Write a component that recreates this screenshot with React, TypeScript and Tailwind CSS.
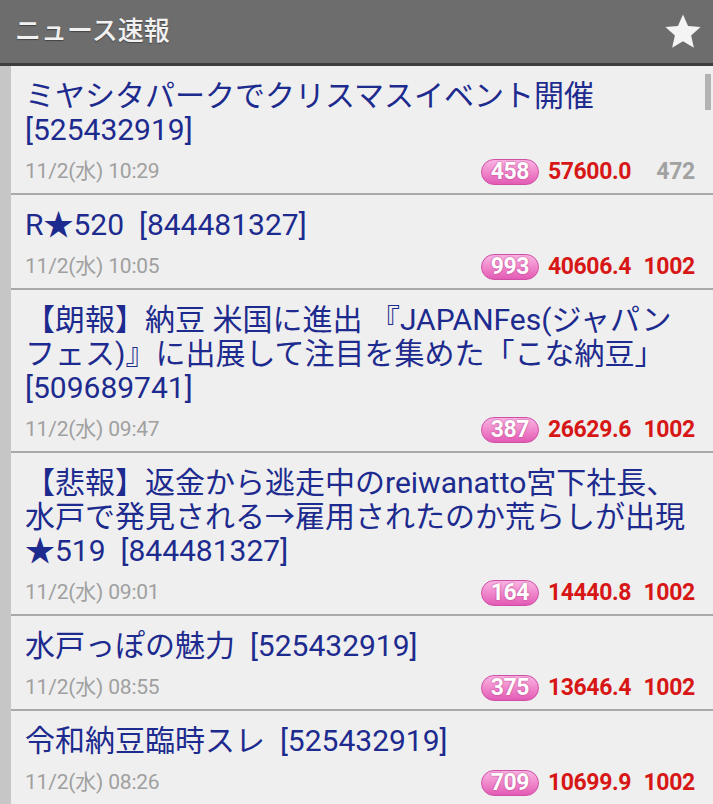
const ROWS = [
  { lines: ["ミヤシタパークでクリスマスイベント開催", "[525432919]"], time: "11/2(水) 10:29", badge: "458", score: "57600.0", count: "472", gray: true },
  { lines: ["R★520\u00a0\u00a0[844481327]"], time: "11/2(水) 10:05", badge: "993", score: "40606.4", count: "1002" },
  { lines: ["【朗報】納豆 米国に進出 『JAPANFes(ジャパン", "フェス)』に出展して注目を集めた「こな納豆」", "[509689741]"], time: "11/2(水) 09:47", badge: "387", score: "26629.6", count: "1002" },
  { lines: ["【悲報】返金から逃走中のreiwanatto宮下社長、", "水戸で発見される→雇用されたのか荒らしが出現", "★519\u00a0\u00a0[844481327]"], time: "11/2(水) 09:01", badge: "164", score: "14440.8", count: "1002" },
  { lines: ["水戸っぽの魅力\u00a0\u00a0[525432919]"], time: "11/2(水) 08:55", badge: "375", score: "13646.4", count: "1002" },
  { lines: ["令和納豆臨時スレ\u00a0\u00a0[525432919]"], time: "11/2(水) 08:26", badge: "709", score: "10699.9", count: "1002" },
];

function Row({ row, first }: { row: (typeof ROWS)[number]; first: boolean }) {
  return (
    <div className={`pl-[14px] pr-[18px] pt-[13px] pb-[7px] ${first ? "" : "border-t-2 border-[#a9a9a9]"}`}>
      <div className="text-[30px] leading-[34px] text-[#1d2a8e] whitespace-nowrap">
        {row.lines.map((l) => (
          <div key={l}>{l}</div>
        ))}
      </div>
      <div className="flex items-center mt-[11px] h-[28px]">
        <span className="text-[21px] text-[#a0a0a0] tracking-[-0.2px]">{row.time}</span>
        <div className="ml-auto flex items-center">
          <span className="h-[26px] px-[9px] rounded-full border border-[#cf4fa6] bg-gradient-to-b from-[#f9b3e2] to-[#e35ab5] text-white font-bold text-[23px] leading-[24px] tracking-[-0.5px] [text-shadow:0_0_2px_#b0307f]">
            {row.badge}
          </span>
          <span className="ml-[9px] text-[23px] font-bold text-[#d71616] tracking-[-0.4px]">{row.score}</span>
          <span className={`w-[64px] text-right text-[23px] font-bold tracking-[-0.3px] ${row.gray ? "text-[#a2a2a2]" : "text-[#d71616]"}`}>
            {row.count}
          </span>
        </div>
      </div>
    </div>
  );
}

export default function App() {
  return (
    <div
      className="relative w-[713px] h-[804px] overflow-hidden bg-[#efefef]"
      style={{ fontFamily: "Roboto, 'Noto Sans CJK JP', sans-serif" }}
    >
      <div className="h-[66px] bg-[#6d6d6d] border-b-[3px] border-[#3e3e3e] flex items-center pl-[15px] pr-[10px]">
        <h1 className="text-[26px] font-medium text-[#f1f1f1] [text-shadow:0_1px_1px_#444]">ニュース速報</h1>
        <svg className="ml-auto mt-[-1px]" width="40" height="39" viewBox="0 0 24 24">
          <path fill="#f4f4f4" d="M12 1.5l3.1 7.1 7.7.7-5.8 5.1 1.7 7.6L12 18l-6.7 4 1.7-7.6-5.8-5.1 7.7-.7z" />
        </svg>
      </div>
      <div className="flex">
        <div className="w-[11px] shrink-0 bg-[#c6c6c6]" />
        <div className="flex-1">
          {ROWS.map((r, i) => (
            <Row key={i} row={r} first={i === 0} />
          ))}
        </div>
      </div>
      <div className="absolute left-[705px] top-[74px] w-[6px] h-[36px] bg-[#b3b3b3]" />
    </div>
  );
}
